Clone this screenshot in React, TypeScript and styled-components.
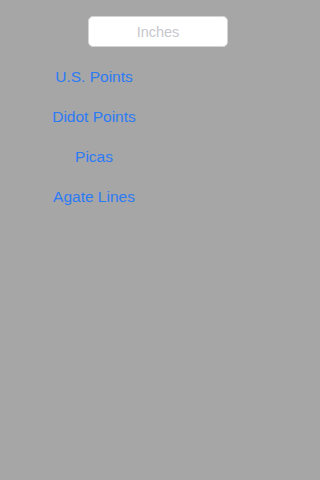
import React from "react";
import styled, { createGlobalStyle } from "styled-components";

const Global = createGlobalStyle`
  html, body { margin: 0; padding: 0; background: #a6a6a6; }
  body { font-family: "Liberation Sans", Arial, sans-serif; }
`;

const Page = styled.div`
  width: 320px;
  height: 480px;
  background: #a6a6a6;
  display: flex;
  flex-direction: column;
  padding-top: 16px;
  box-sizing: border-box;
`;

const Field = styled.input`
  margin-left: 88px;
  width: 140px;
  height: 31px;
  box-sizing: border-box;
  border: 1px solid #d4d4d4;
  border-radius: 5px;
  background: #ffffff;
  text-align: center;
  font-family: "Liberation Sans", Arial, sans-serif;
  font-size: 14.5px;
  color: #333;
  outline: none;
  padding: 0 6px;
  &::placeholder { color: #c7c7cd; }
`;

const List = styled.div`
  margin-top: 10px;
  margin-left: 44px;
  width: 100px;
  display: flex;
  flex-direction: column;
`;

const UnitButton = styled.button`
  height: 40px;
  border: none;
  background: transparent;
  padding: 0 0 1px;
  color: #2c7bf6;
  font-family: "Liberation Sans", Arial, sans-serif;
  font-size: 15.5px;
  white-space: nowrap;
  text-align: center;
  cursor: pointer;
`;

const units = ["U.S. Points", "Didot Points", "Picas", "Agate Lines"];

export default function App() {
  return (
    <>
      <Global />
      <Page>
        <Field placeholder="Inches" />
        <List>
          {units.map((u) => (
            <UnitButton key={u}>{u}</UnitButton>
          ))}
        </List>
      </Page>
    </>
  );
}
